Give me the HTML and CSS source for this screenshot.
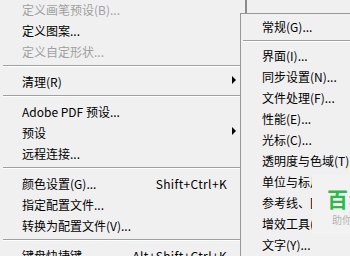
FILE: index.html
```html
<!DOCTYPE html>
<html>
	<head>
		<title>编辑菜单</title>
		<link rel="stylesheet" href="styles.css">
	</head>
	<body>
		<div class="menu">
			<div class="item off"><span class="label">定义画笔预设(B)...</span></div>
			<div class="item"><span class="label">定义图案...</span></div>
			<div class="item off"><span class="label">定义自定形状...</span></div>
			<div class="sep"></div>
			<div class="item"><span class="label">清理(R)</span><span class="arrow-cell"><i class="arrow"></i></span></div>
			<div class="sep"></div>
			<div class="item"><span class="label">Adobe PDF 预设...</span></div>
			<div class="item"><span class="label">预设</span><span class="arrow-cell"><i class="arrow"></i></span></div>
			<div class="item"><span class="label">远程连接...</span></div>
			<div class="sep"></div>
			<div class="item"><span class="label">颜色设置(G)...</span><span class="key">Shift+Ctrl+K</span></div>
			<div class="item"><span class="label">指定配置文件...</span></div>
			<div class="item"><span class="label">转换为配置文件(V)...</span></div>
			<div class="sep"></div>
			<div class="item"><span class="label">键盘快捷键...</span><span class="key">Alt+Shift+Ctrl+K</span></div>
		</div>

		<div class="submenu">
			<div class="item">常规(G)...</div>
			<div class="sep"></div>
			<div class="item">界面(I)...</div>
			<div class="item">同步设置(N)...</div>
			<div class="item">文件处理(F)...</div>
			<div class="item">性能(E)...</div>
			<div class="item">光标(C)...</div>
			<div class="item">透明度与色域(T)...</div>
			<div class="item">单位与标尺(U)...</div>
			<div class="item">参考线、网格和切片(S)...</div>
			<div class="item">增效工具(P)...</div>
			<div class="item">文字(Y)...</div>
		</div>

		<div class="watermark">
			<div class="brand">百科</div>
			<div class="slogan">助你</div>
		</div>
	</body>
</html>
```

FILE: styles.css
```css
body {
	margin: 0;
	width: 350px;
	height: 256px;
	overflow: hidden;
	position: relative;
	background: #f0f0f0;
	color: #000;
	font-family: "Noto Sans CJK SC", "Noto Sans", sans-serif;
	font-size: 12px;
}

.menu {
	width: 245px;
	margin-top: -1px;
	border-right: 2px solid #8c8c8c;
	height: 270px;
}

.item {
	display: flex;
	align-items: center;
	height: 21px;
	line-height: 21px;
	padding-left: 22px;
	white-space: nowrap;
}

.item.off {
	color: #a0a0a0;
}

.key {
	margin-left: auto;
	margin-right: 18px;
	letter-spacing: 0.35px;
}

.arrow-cell {
	margin-left: auto;
	width: 13px;
	height: 21px;
	display: flex;
	align-items: center;
}

.arrow {
	display: block;
	width: 0;
	height: 0;
	margin-top: -3px;
	border-top: 4px solid transparent;
	border-bottom: 4px solid transparent;
	border-left: 4px solid #000;
}

.sep {
	margin: 3px 0 4px 3px;
	border-top: 1px solid #a0a0a0;
	border-bottom: 1px solid #fff;
}

/* cascading submenu */
.submenu {
	position: absolute;
	left: 240px;
	top: 13px;
	width: 140px;
	height: 260px;
	padding-top: 2px;
	background: #f0f0f0;
	border-left: 1px solid #979797;
	border-top: 1px solid #979797;
}

.submenu .item {
	padding-left: 21px;
}

.submenu .sep {
	margin: 3px 0 3px 2px;
}

.watermark {
	position: absolute;
	left: 312px;
	top: 175px;
	width: 60px;
	height: 60px;
	background: #f2f2f2;
	padding-left: 15px;
	box-sizing: border-box;
}

.brand {
	margin-top: 11px;
	color: #2bb94b;
	font-size: 21px;
	font-weight: bold;
	line-height: 24px;
	letter-spacing: 1px;
}

.slogan {
	margin-top: 4px;
	padding-left: 5px;
	color: #b4b4b4;
	font-size: 10px;
	line-height: 12px;
}
```
